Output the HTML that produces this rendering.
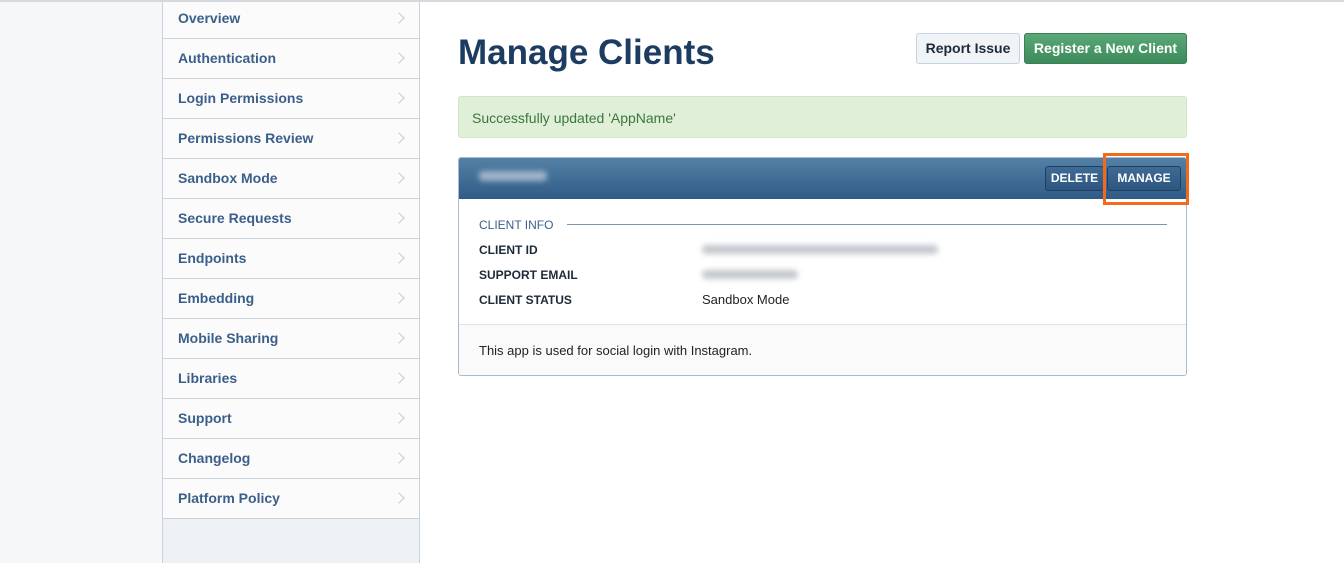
<!DOCTYPE html>
<html><head><style>
*{margin:0;padding:0;box-sizing:border-box}
body{width:1344px;height:563px;overflow:hidden;background:#fff;font-family:"Liberation Sans",sans-serif;position:relative}
.topline{position:absolute;left:0;top:0;width:1344px;height:2px;background:#d6d9dc}
.leftbg{position:absolute;left:0;top:2px;width:162px;height:561px;background:#f6f7f9}
.side{position:absolute;left:162px;top:2px;width:258px;height:561px;background:#eef1f4;border-left:1px solid #c9d3dd;border-right:1px solid #c9d3dd}
.item{height:40px;border-bottom:1px solid #c9d3dd;background:#fbfbfc;position:relative;font-size:14px;font-weight:bold;color:#3b5f8a;padding-left:15px;line-height:38px}
.item:first-child{height:37px;line-height:33px}
.item:after{content:"";position:absolute;right:16px;top:15px;width:7px;height:7px;border-right:1px solid #c5c9cf;border-top:1px solid #c5c9cf;transform:rotate(45deg)}
.item:first-child:after{top:12px}
h1{position:absolute;left:458px;top:33px;font-size:35px;color:#1d3c62;font-weight:bold}
.btn{position:absolute;top:33px;height:31px;border-radius:3px;font-size:14px;font-weight:bold;line-height:29px;text-align:center}
.rep{left:916px;width:104px;background:#f1f4f7;border:1px solid #c6d4e2;color:#1d2a3a}
.reg{left:1024px;width:163px;background:linear-gradient(#5aa877,#3d8a5a);border:1px solid #3b7f55;color:#fff}
.alert{position:absolute;left:458px;top:96px;width:729px;height:42px;background:#dfefd8;border:1px solid #d1e6c6;border-radius:3px;color:#3c763d;font-size:14px;line-height:42px;padding-left:13px}
.card{position:absolute;left:458px;top:157px;width:729px;height:219px;border:1px solid #a9bccf;border-radius:3px;overflow:hidden}
.hd{height:41px;background:linear-gradient(#5580a6,#2f5b85);position:relative}
.blur{position:absolute;left:20px;top:13px;width:68px;height:10px;background:#9fb5cb;filter:blur(3px);border-radius:4px}
.sb{position:absolute;top:8px;height:25px;border:1px solid #1f3f60;border-radius:3px;background:linear-gradient(#3f6a94,#2d5780);color:#fff;font-size:12px;font-weight:bold;line-height:23px;text-align:center}
.info{position:absolute;top:60px;left:20px;font-size:12px;color:#3b5f8a}
.rule{position:absolute;top:66px;left:108px;width:600px;height:1px;background:#7e97b0}
.lbl{position:absolute;left:20px;font-size:12px;font-weight:bold;color:#1d2a3a}
.val{position:absolute;left:243px;font-size:13px;color:#222}
.bl{position:absolute;left:243px;height:9px;background:#c3c7cc;filter:blur(3px);border-radius:4px}
.ft{position:absolute;left:0;top:166px;width:100%;height:53px;border-top:1px solid #dde3e9;background:#fafafa;font-size:13px;color:#222;padding-left:20px;line-height:52px}
.or{position:absolute;left:1103px;top:153px;width:86px;height:52px;border:3px solid #f26a1b}
</style></head><body>
<div class="topline"></div>
<div class="leftbg"></div>
<div class="side">
<div class="item">Overview</div><div class="item">Authentication</div><div class="item">Login Permissions</div><div class="item">Permissions Review</div><div class="item">Sandbox Mode</div><div class="item">Secure Requests</div><div class="item">Endpoints</div><div class="item">Embedding</div><div class="item">Mobile Sharing</div><div class="item">Libraries</div><div class="item">Support</div><div class="item">Changelog</div><div class="item">Platform Policy</div>
</div>
<h1>Manage Clients</h1>
<div class="btn rep">Report Issue</div>
<div class="btn reg">Register a New Client</div>
<div class="alert">Successfully updated 'AppName'</div>
<div class="card">
<div class="hd"><div class="blur"></div>
<div class="sb" style="left:586px;width:59px">DELETE</div>
<div class="sb" style="left:648px;width:74px">MANAGE</div></div>
<div class="info">CLIENT INFO</div><div class="rule"></div>
<div class="lbl" style="top:85px">CLIENT ID</div><div class="bl" style="top:87px;width:236px"></div>
<div class="lbl" style="top:110px">SUPPORT EMAIL</div><div class="bl" style="top:112px;width:96px"></div>
<div class="lbl" style="top:135px">CLIENT STATUS</div><div class="val" style="top:134px">Sandbox Mode</div>
<div class="ft">This app is used for social login with Instagram.</div>
</div>
<div class="or"></div>
</body></html>
